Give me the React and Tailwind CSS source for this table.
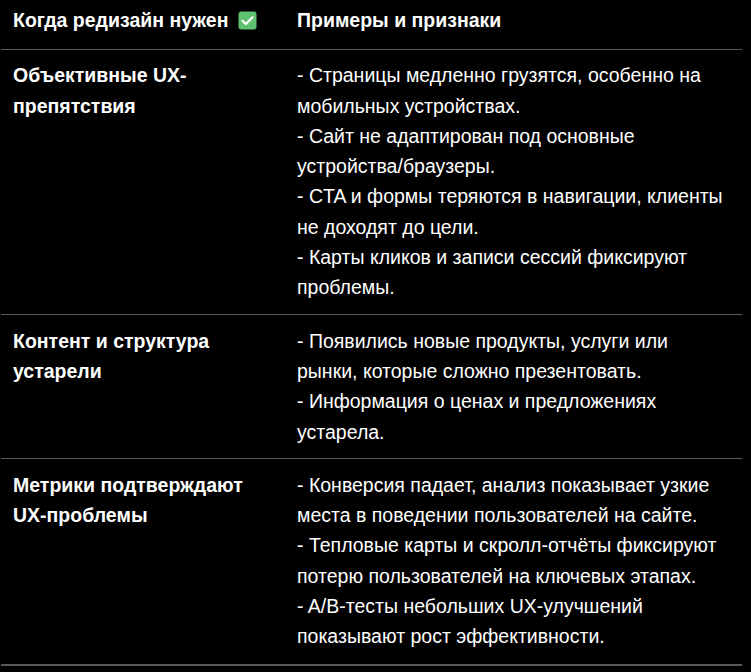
import React from "react";

const rows = [
  {
    title: "Объективные UX-препятствия",
    pad: "pt-[10px] pb-[11px]",
    items: [
      "- Страницы медленно грузятся, особенно на мобильных устройствах.",
      "- Сайт не адаптирован под основные устройства/браузеры.",
      "- CTA и формы теряются в навигации, клиенты не доходят до цели.",
      "- Карты кликов и записи сессий фиксируют проблемы.",
    ],
  },
  {
    title: "Контент и структура устарели",
    pad: "pt-[11px] pb-[11px]",
    items: [
      "- Появились новые продукты, услуги или рынки, которые сложно презентовать.",
      "- Информация о ценах и предложениях устарела.",
    ],
  },
  {
    title: "Метрики подтверждают UX-проблемы",
    pad: "pt-[11px] pb-[12px]",
    items: [
      "- Конверсия падает, анализ показывает узкие места в поведении пользователей на сайте.",
      "- Тепловые карты и скролл-отчёты фиксируют потерю пользователей на ключевых этапах.",
      "- A/B-тесты небольших UX-улучшений показывают рост эффективности.",
    ],
  },
];

function Check() {
  return (
    <svg width="19" height="19" viewBox="0 0 19 19" className="inline-block align-[-3px] ml-[10px]">
      <rect x="0.5" y="0.5" width="18" height="18" rx="3" fill="#5ec26f" />
      <path d="M4.5 9.8 L7.8 13 L14.5 6.3" fill="none" stroke="#ffffff" strokeWidth="2.2" strokeLinecap="round" strokeLinejoin="round" />
    </svg>
  );
}

export default function App() {
  return (
    <div className="min-h-[672px] w-[751px] bg-black text-white font-['Liberation_Sans',Arial,sans-serif] text-[19.5px] leading-[30.3px]">
      <table className="ml-[1px] w-[741px] table-fixed border-collapse">
        <colgroup>
          <col className="w-[284px]" />
          <col />
        </colgroup>
        <thead>
          <tr className="border-b border-[#5a5a5a]">
            <th className="px-3 pt-[5px] pb-[14px] text-left font-bold">
              Когда редизайн нужен
              <Check />
            </th>
            <th className="px-3 pt-[5px] pb-[14px] text-left font-bold">Примеры и признаки</th>
          </tr>
        </thead>
        <tbody>
          {rows.map((r, i) => (
            <tr
              key={i}
              className={i === rows.length - 1 ? "border-b-2 border-[#5a5a5a]" : "border-b border-[#5a5a5a]"}
            >
              <td className={`px-3 align-top font-bold ${r.pad}`}>{r.title}</td>
              <td className={`px-3 align-top ${r.pad}`}>
                {r.items.map((t, j) => (
                  <div key={j}>{t}</div>
                ))}
              </td>
            </tr>
          ))}
        </tbody>
      </table>
    </div>
  );
}
